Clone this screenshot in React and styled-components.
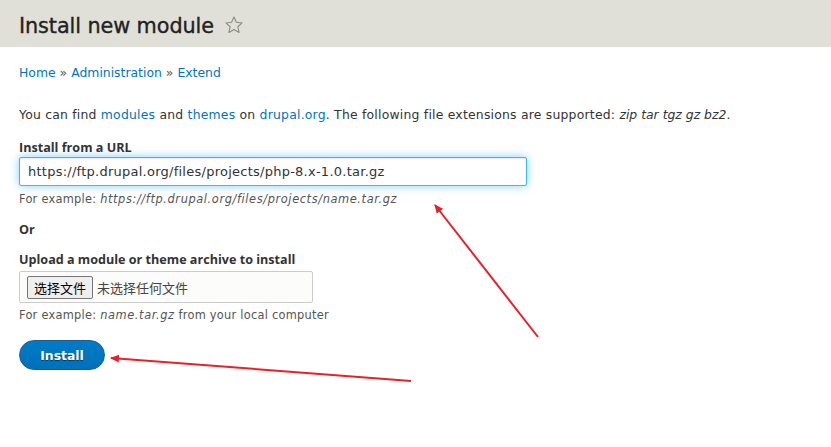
import React from "react";
import styled, { createGlobalStyle } from "styled-components";

const Global = createGlobalStyle`
  html, body { margin: 0; padding: 0; background: #fff; }
  body {
    font-family: "DejaVu Sans", Verdana, sans-serif;
    color: #333;
    font-size: 13px;
  }
  * { box-sizing: border-box; }
`;

const Page = styled.div`
  position: relative;
  width: 831px;
  height: 447px;
  overflow: hidden;
`;

const Header = styled.header`
  background: #e0e0d8;
  height: 47px;
  display: flex;
  align-items: center;
  padding: 4px 19px 0;
  gap: 10px;
`;

const Title = styled.h1`
  margin: 0;
  font-size: 20.8px;
  font-weight: normal;
  color: #222;
  letter-spacing: -0.1px;
  -webkit-text-stroke: 0.35px #222;
`;

const Star = styled.svg`
  width: 20px;
  height: 20px;
  margin-top: -1px;
`;

const Content = styled.main`
  padding: 0 19px;
`;

const Breadcrumb = styled.nav`
  margin-top: 18px;
  font-size: 12.4px;
  color: #333;
  display: flex;
  gap: 4px;
`;

const Link = styled.a`
  color: #0074bd;
  text-decoration: none;
`;

const Sep = styled.span`
  color: #555;
`;

const Intro = styled.p`
  margin: 26px 0 0;
  font-size: 12.4px;
  line-height: 18px;
  letter-spacing: 0.22px;
`;

const Em = styled.em`
  font-style: italic;
  letter-spacing: ${(p) => p.$ls || 0}px;
`;

const Field = styled.div`
  margin-top: ${(p) => p.$mt}px;
`;

const Label = styled.label`
  display: block;
  font-family: "Open Sans", "DejaVu Sans", sans-serif;
  font-weight: 700;
  font-size: 12.6px;
  line-height: 16px;
  margin-bottom: ${(p) => (p.$mb ?? 3)}px;
  color: #333;
`;

const TextInput = styled.input`
  display: block;
  width: 508px;
  height: 29px;
  border: 1px solid #40b6ff;
  border-radius: 2px;
  box-shadow: inset 0 1px 2px rgba(0, 0, 0, 0.1), 0 0 8px rgba(0, 160, 255, 0.5);
  padding: 0 8px;
  font-family: "DejaVu Sans", Verdana, sans-serif;
  font-size: 13px;
  letter-spacing: 0.25px;
  color: #333;
  outline: none;
  background: #fff;
`;

const Description = styled.div`
  margin-top: ${(p) => p.$mt ?? 6}px;
  font-size: 11.4px;
  color: #555;
  letter-spacing: 0.25px;
`;

const Or = styled(Label).attrs({ as: "div" })`
  margin: 16px 0 0;
`;

const FileBox = styled.div`
  width: 294px;
  height: 32px;
  border: 1px solid #ccc;
  border-radius: 2px;
  background: #fcfcfa;
  display: flex;
  align-items: center;
  padding: 0 7px;
  gap: 4px;
  font-family: "Noto Sans CJK SC", sans-serif;
  font-size: 13px;
  color: #444;
`;

const FileButton = styled.button`
  height: 23px;
  padding: 0 6px;
  border: 1px solid #767676;
  border-radius: 2px;
  background: #efefef;
  font-family: "Noto Sans CJK SC", sans-serif;
  font-size: 13px;
  color: #000;
  line-height: 1;
`;

const InstallButton = styled.button`
  margin-top: 18px;
  width: 86px;
  height: 30px;
  border: 1px solid #1e5c90;
  border-radius: 20px;
  background: linear-gradient(to bottom, #007bc6, #0071b8);
  color: #fff;
  font-family: "DejaVu Sans", Verdana, sans-serif;
  font-weight: bold;
  font-size: 12.4px;
  text-shadow: 0 1px 1px rgba(0, 0, 0, 0.5);
  cursor: pointer;
`;

const Overlay = styled.svg`
  position: absolute;
  left: 0;
  top: 0;
  pointer-events: none;
`;

export default function App() {
  return (
    <Page>
      <Global />
      <Header>
        <Title>Install new module</Title>
        <Star viewBox="0 0 24 24">
          <path
            d="M12 2.5l2.9 6.3 6.8.7-5.1 4.6 1.5 6.8L12 17.4l-6.1 3.5 1.5-6.8-5.1-4.6 6.8-.7z"
            fill="none"
            stroke="#8a8a86"
            strokeWidth="1.3"
            strokeLinejoin="round"
          />
        </Star>
      </Header>
      <Content>
        <Breadcrumb>
          <Link href="#">Home</Link>
          <Sep>»</Sep>
          <Link href="#">Administration</Link>
          <Sep>»</Sep>
          <Link href="#">Extend</Link>
        </Breadcrumb>
        <Intro>
          You can find <Link href="#">modules</Link> and <Link href="#">themes</Link> on{" "}
          <Link href="#">drupal.org</Link>. The following file extensions are supported:{" "}
          <Em>zip tar tgz gz bz2</Em>.
        </Intro>
        <Field $mt={16}>
          <Label $mb={1}>Install from a URL</Label>
          <TextInput readOnly value="https://ftp.drupal.org/files/projects/php-8.x-1.0.tar.gz" />
          <Description>
            For example: <Em $ls={0.6}>https://ftp.drupal.org/files/projects/name.tar.gz</Em>
          </Description>
        </Field>
        <Or>Or</Or>
        <Field $mt={14}>
          <Label $mb={3}>Upload a module or theme archive to install</Label>
          <FileBox>
            <FileButton>选择文件</FileButton>
            <span>未选择任何文件</span>
          </FileBox>
          <Description $mt={5}>
            For example: <Em $ls={0.6}>name.tar.gz</Em> from your local computer
          </Description>
        </Field>
        <InstallButton>Install</InstallButton>
      </Content>
      <Overlay width="831" height="447">
        <defs>
          <marker id="ah" markerWidth="10" markerHeight="10" refX="8" refY="5" orient="auto" markerUnits="userSpaceOnUse">
            <path d="M0 1 L9 5 L0 9 Z" fill="#e8202a" />
          </marker>
        </defs>
        <line x1="538" y1="337" x2="435" y2="205" stroke="#e8202a" strokeWidth="2" markerEnd="url(#ah)" />
        <line x1="411" y1="381" x2="111" y2="358" stroke="#e8202a" strokeWidth="2" markerEnd="url(#ah)" />
      </Overlay>
    </Page>
  );
}
